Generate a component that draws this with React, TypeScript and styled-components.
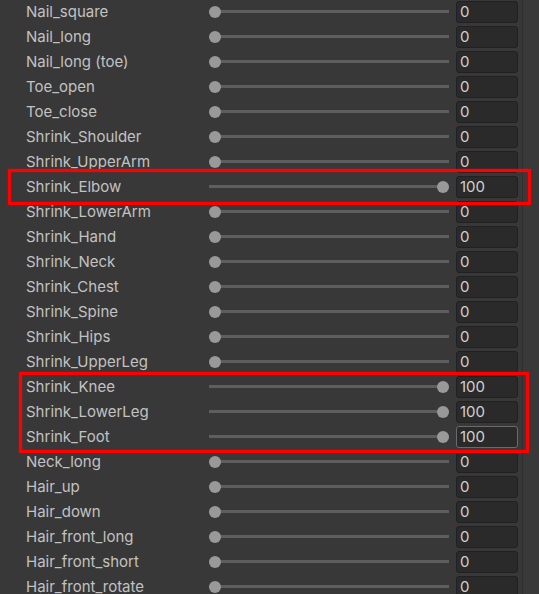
import styled, { createGlobalStyle } from 'styled-components'

// ─── Data ─────────────────────────────────────────────────────

type Shape = { name: string; value: number; focused?: boolean }

const SHAPES: Shape[] = [
  { name: 'Nail_square', value: 0 },
  { name: 'Nail_long', value: 0 },
  { name: 'Nail_long (toe)', value: 0 },
  { name: 'Toe_open', value: 0 },
  { name: 'Toe_close', value: 0 },
  { name: 'Shrink_Shoulder', value: 0 },
  { name: 'Shrink_UpperArm', value: 0 },
  { name: 'Shrink_Elbow', value: 100 },
  { name: 'Shrink_LowerArm', value: 0 },
  { name: 'Shrink_Hand', value: 0 },
  { name: 'Shrink_Neck', value: 0 },
  { name: 'Shrink_Chest', value: 0 },
  { name: 'Shrink_Spine', value: 0 },
  { name: 'Shrink_Hips', value: 0 },
  { name: 'Shrink_UpperLeg', value: 0 },
  { name: 'Shrink_Knee', value: 100 },
  { name: 'Shrink_LowerLeg', value: 100 },
  { name: 'Shrink_Foot', value: 100, focused: true },
  { name: 'Neck_long', value: 0 },
  { name: 'Hair_up', value: 0 },
  { name: 'Hair_down', value: 0 },
  { name: 'Hair_front_long', value: 0 },
  { name: 'Hair_front_short', value: 0 },
  { name: 'Hair_front_rotate', value: 0 },
]

// ─── Styled Components ──────────────────────────────────────────

const GlobalStyle = createGlobalStyle`
  html, body {
    margin: 0;
    padding: 0;
    background: #383838;
    overflow: hidden;
  }
`

const Inspector = styled.div`
  position: relative;
  width: 539px;
  height: 594px;
  overflow: hidden;
  display: flex;
  background: #383838;
  font-family: Inter, 'Noto Sans', sans-serif;
`

const List = styled.div`
  width: 522px;
  display: flex;
  flex-direction: column;
`

const Gutter = styled.div`
  flex: 1;
  border-left: 1px solid #2f2f2f;
  background: #393939;
`

const Row = styled.div`
  height: 25px;
  flex-shrink: 0;
  display: flex;
  align-items: center;
`

const Label = styled.div`
  width: 183px;
  padding: 0 0 2px 26px;
  font-size: 15px;
  color: #c2c2c2;
  white-space: nowrap;
  overflow: hidden;
`

// track drawn as a centred 3px band; the knob sits at either end of it
const Slider = styled.div<{ $value: number }>`
  width: 240px;
  height: 25px;
  margin-right: 7px;
  display: flex;
  align-items: center;
  padding-bottom: 1px;
  box-sizing: border-box;
  justify-content: ${({ $value }) => ($value >= 100 ? 'flex-end' : 'flex-start')};
  background: linear-gradient(
    to bottom,
    transparent 10px,
    #5e5e5e 10px,
    #5e5e5e 13px,
    transparent 13px
  );
`

const Knob = styled.div`
  width: 12px;
  height: 12px;
  border-radius: 50%;
  background: #999999;
`

const ValueField = styled.div<{ $focused?: boolean }>`
  box-sizing: border-box;
  width: 62px;
  height: 22px;
  align-self: flex-start;
  margin-top: 1px;
  border-radius: 3px;
  background: #2a2a2a;
  border: 1px solid ${({ $focused }) => ($focused ? '#6a6a6a' : '#212121')};
  color: #d0d0d0;
  font-size: 15px;
  line-height: 20px;
  padding-left: 3px;
`

const Highlight = styled.div<{ $x: number; $y: number; $w: number; $h: number }>`
  position: absolute;
  left: ${({ $x }) => $x}px;
  top: ${({ $y }) => $y}px;
  width: ${({ $w }) => $w}px;
  height: ${({ $h }) => $h}px;
  box-sizing: border-box;
  border: 3.5px solid #ff0000;
  box-shadow: 0 0 1.5px rgba(255, 0, 0, 0.7), inset 0 0 1.5px rgba(255, 0, 0, 0.7);
  pointer-events: none;
`

// ─── Component ────────────────────────────────────────────────

export default function App() {
  return (
    <>
      <GlobalStyle />
      <Inspector>
        <List>
          {SHAPES.map((s) => (
            <Row key={s.name}>
              <Label>{s.name}</Label>
              <Slider $value={s.value}>
                <Knob />
              </Slider>
              <ValueField $focused={s.focused}>{s.value}</ValueField>
            </Row>
          ))}
        </List>
        <Gutter />

        {/* annotation boxes drawn over the list */}
        <Highlight $x={8} $y={169} $w={523} $h={36} />
        <Highlight $x={19} $y={372} $w={510} $h={81} />
      </Inspector>
    </>
  )
}
